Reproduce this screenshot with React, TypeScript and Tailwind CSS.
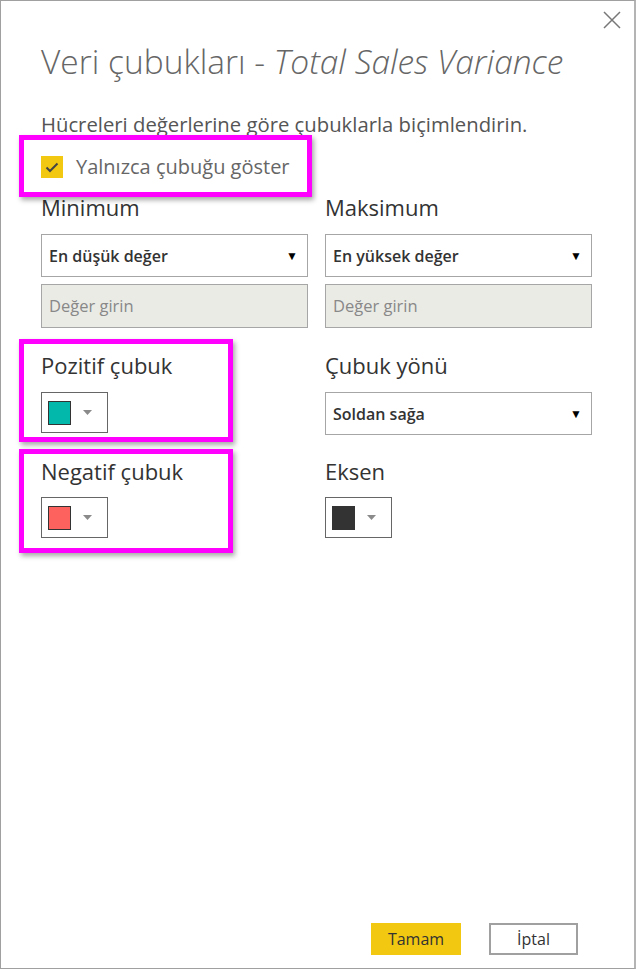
import React from 'react';

const font = { fontFamily: '"Open Sans", "Noto Sans", sans-serif' };

const Select = ({ value }: { value: string }) => (
  <div className="flex h-[43px] items-center justify-between border border-[#a6a6a6] bg-white pl-[7px] pr-[9px]">
    <span className="text-[16px] font-semibold text-[#333]">{value}</span>
    <span className="text-[12px] text-black">▼</span>
  </div>
);

const DisabledInput = () => (
  <div className="flex h-[44px] items-center border border-[#a6a6a6] bg-[#ebebe6] px-[7px]">
    <span className="text-[16.5px] text-[#888]">Değer girin</span>
  </div>
);

const ColorPicker = ({ color }: { color: string }) => (
  <div className="flex h-[41px] w-[67px] items-center gap-[12px] border border-[#666] bg-white pl-[6px]">
    <div className="h-[24px] w-[23px] border border-[#333]" style={{ background: color }} />
    <svg width="9" height="5" viewBox="0 0 9 5">
      <path d="M0 0 L9 0 L4.5 5 Z" fill="#8a8a8a" />
    </svg>
  </div>
);

const Label = ({ children }: { children: React.ReactNode }) => (
  <div className="text-[22px] leading-[28px] text-[#333]">{children}</div>
);

const Highlight = ({ className }: { className: string }) => (
  <div
    className={`pointer-events-none absolute border-[5px] border-[#ff00ff] shadow-[2px_3px_5px_rgba(0,0,0,0.35)] ${className}`}
  />
);

export default function App() {
  return (
    <div className="h-[970px] w-[639px] bg-white" style={font}>
      <div className="relative flex h-[969px] w-[636px] flex-col border-y border-l border-r-2 border-y-[#a0a0a0] border-l-[#a0a0a0] border-r-[#b4b4b4] pl-[40px] pr-[42px]">
        {/* close */}
        <svg className="absolute right-[13px] top-[10px]" width="18" height="18" viewBox="0 0 18 18">
          <path d="M1 1 L17 17 M17 1 L1 17" stroke="#777" strokeWidth="1.5" />
        </svg>

        <h1 className="mt-[39px] whitespace-nowrap text-[33.5px] font-light leading-[42px] text-[#666]">
          Veri çubukları - <em className="italic">Total Sales Variance</em>
        </h1>

        <p className="mt-[30px] whitespace-nowrap text-[20.3px] leading-[24px] text-[#555]">
          Hücreleri değerlerine göre çubuklarla biçimlendirin.
        </p>

        <div className="mt-[19px] flex items-center gap-[13px]">
          <div className="flex h-[22px] w-[22px] items-center justify-center bg-[#f2c811]">
            <svg width="14" height="11" viewBox="0 0 14 11">
              <path d="M1.5 5.5 L5 9 L12.5 1.5" fill="none" stroke="#444" strokeWidth="2" />
            </svg>
          </div>
          <span className="text-[20px] leading-[24px] text-[#666]">Yalnızca çubuğu göster</span>
        </div>

        <div className="mt-[14px] grid grid-cols-2 gap-x-[17px]">
          <div className="flex flex-col">
            <Label>Minimum</Label>
            <div className="mt-[13px]">
              <Select value="En düşük değer" />
            </div>
            <div className="mt-[7px]">
              <DisabledInput />
            </div>
          </div>
          <div className="flex flex-col">
            <Label>Maksimum</Label>
            <div className="mt-[13px]">
              <Select value="En yüksek değer" />
            </div>
            <div className="mt-[7px]">
              <DisabledInput />
            </div>
          </div>

          <div className="mt-[23px] flex flex-col">
            <Label>Pozitif çubuk</Label>
            <div className="mt-[13px]">
              <ColorPicker color="#01b8aa" />
            </div>
          </div>
          <div className="mt-[23px] flex flex-col">
            <Label>Çubuk yönü</Label>
            <div className="mt-[13px]">
              <Select value="Soldan sağa" />
            </div>
          </div>

          <div className="mt-[22px] flex flex-col">
            <Label>Negatif çubuk</Label>
            <div className="mt-[12px]">
              <ColorPicker color="#fd625e" />
            </div>
          </div>
          <div className="mt-[22px] flex flex-col">
            <Label>Eksen</Label>
            <div className="mt-[12px]">
              <ColorPicker color="#333333" />
            </div>
          </div>
        </div>

        <div className="mt-auto mb-[13px] flex justify-end gap-[28px] pr-[14px]">
          <button className="h-[32px] w-[90px] bg-[#f2c811] text-[16px] text-[#333]">Tamam</button>
          <button className="h-[32px] w-[89px] border-2 border-[#a0a0a0] bg-white text-[16px] text-[#333]">
            İptal
          </button>
        </div>

        <Highlight className="left-[18px] top-[134px] h-[62px] w-[293px]" />
        <Highlight className="left-[18px] top-[338px] h-[103px] w-[214px]" />
        <Highlight className="left-[18px] top-[448px] h-[104px] w-[214px]" />
      </div>
    </div>
  );
}
